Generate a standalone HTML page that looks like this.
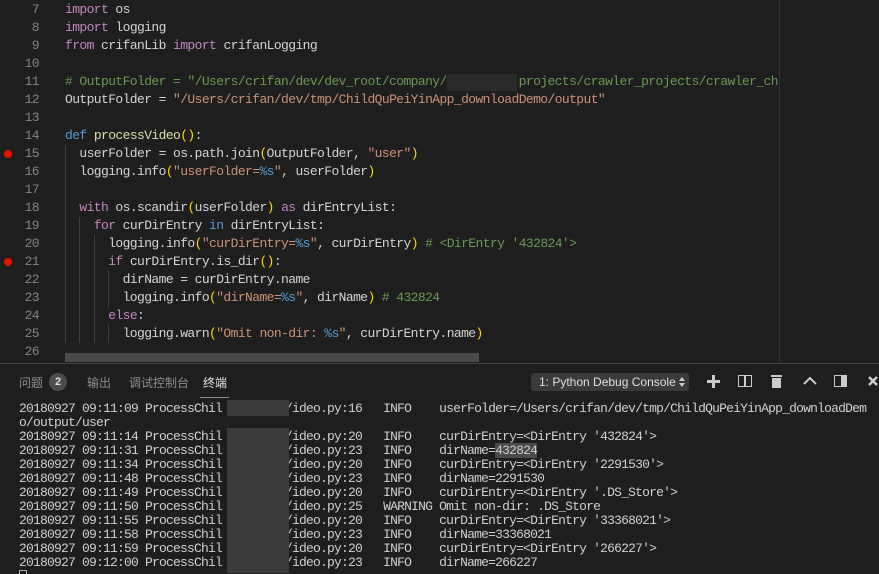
<!DOCTYPE html>
<html><head><meta charset="utf-8"><style>
body{margin:0;width:879px;height:573px;background:#1e1e1e;overflow:hidden;position:relative;font-family:"Liberation Mono",monospace;}
.ln{position:absolute;left:0;width:39px;text-align:right;color:#858585;font-size:13px;letter-spacing:-0.6px;line-height:18px;}
.cd{position:absolute;left:65px;color:#d4d4d4;font-size:13px;letter-spacing:-0.6px;line-height:18px;white-space:pre;}
.k{color:#c586c0}.b{color:#569cd6}.f{color:#dcdcaa}.s{color:#ce9178}.c{color:#6a9955}.p{color:#ffd700}
.bp{position:absolute;left:4px;width:8px;height:8px;border-radius:50%;background:#e51400}
.t{position:absolute;left:19px;color:#d0d0d0;font-size:13px;letter-spacing:-0.8px;line-height:14px;white-space:pre;}
.tab{position:absolute;top:374px;font-family:"Liberation Sans","Noto Sans CJK SC",sans-serif;font-size:12px;color:#8f8f8f}
.blur{position:absolute;background:#3b3b3b}
</style></head><body>
<div class="ln" style="top:1px">7</div><div class="cd" style="top:1px"><span class="k">import</span> os</div>
<div class="ln" style="top:19px">8</div><div class="cd" style="top:19px"><span class="k">import</span> logging</div>
<div class="ln" style="top:37px">9</div><div class="cd" style="top:37px"><span class="k">from</span> crifanLib <span class="k">import</span> crifanLogging</div>
<div class="ln" style="top:55px">10</div>
<div class="ln" style="top:73px">11</div><div class="cd" style="top:73px"><span class="c"># OutputFolder = "/Users/crifan/dev/dev_root/company/          projects/crawler_projects/crawler_ch</span></div>
<div class="blur" style="left:447px;top:74px;width:70px;height:17px;background:#2a2a2a"></div>
<div class="ln" style="top:91px">12</div><div class="cd" style="top:91px">OutputFolder = <span class="s">"/Users/crifan/dev/tmp/ChildQuPeiYinApp_downloadDemo/output"</span></div>
<div class="ln" style="top:109px">13</div>
<div class="ln" style="top:127px">14</div><div class="cd" style="top:127px"><span class="b">def</span> <span class="f">processVideo</span><span class="p">()</span>:</div>
<div class="bp" style="top:150px"></div>
<div class="ln" style="top:145px">15</div><div class="cd" style="top:145px">  userFolder = os.path.join<span class="p">(</span>OutputFolder, <span class="s">"user"</span><span class="p">)</span></div>
<div class="ln" style="top:163px">16</div><div class="cd" style="top:163px">  logging.info<span class="p">(</span><span class="s">"userFolder=</span><span class="b">%s</span><span class="s">"</span>, userFolder<span class="p">)</span></div>
<div class="ln" style="top:181px">17</div>
<div class="ln" style="top:199px">18</div><div class="cd" style="top:199px">  <span class="k">with</span> os.scandir<span class="p">(</span>userFolder<span class="p">)</span> <span class="k">as</span> dirEntryList:</div>
<div class="ln" style="top:217px">19</div><div class="cd" style="top:217px">    <span class="k">for</span> curDirEntry <span class="b">in</span> dirEntryList:</div>
<div class="ln" style="top:235px">20</div><div class="cd" style="top:235px">      logging.info<span class="p">(</span><span class="s">"curDirEntry=</span><span class="b">%s</span><span class="s">"</span>, curDirEntry<span class="p">)</span> <span class="c"># &lt;DirEntry '432824'&gt;</span></div>
<div class="bp" style="top:258px"></div>
<div class="ln" style="top:253px">21</div><div class="cd" style="top:253px">      <span class="k">if</span> curDirEntry.is_dir<span class="p">()</span>:</div>
<div class="ln" style="top:271px">22</div><div class="cd" style="top:271px">        dirName = curDirEntry.name</div>
<div class="ln" style="top:289px">23</div><div class="cd" style="top:289px">        logging.info<span class="p">(</span><span class="s">"dirName=</span><span class="b">%s</span><span class="s">"</span>, dirName<span class="p">)</span> <span class="c"># 432824</span></div>
<div class="ln" style="top:307px">24</div><div class="cd" style="top:307px">      <span class="k">else</span>:</div>
<div class="ln" style="top:325px">25</div><div class="cd" style="top:325px">        logging.warn<span class="p">(</span><span class="s">"Omit non-dir: </span><span class="b">%s</span><span class="s">"</span>, curDirEntry.name<span class="p">)</span></div>
<div class="ln" style="top:343px">26</div>
<div style="position:absolute;left:65px;top:145px;width:1px;height:198px;background:#404040"></div>
<div style="position:absolute;left:79px;top:217px;width:1px;height:126px;background:#404040"></div>
<div style="position:absolute;left:94px;top:235px;width:1px;height:108px;background:#404040"></div>
<div style="position:absolute;left:108px;top:271px;width:1px;height:36px;background:#404040"></div>
<div style="position:absolute;left:108px;top:325px;width:1px;height:18px;background:#404040"></div>
<div style="position:absolute;left:779px;top:0;width:1px;height:363px;background:#333"></div>
<div style="position:absolute;left:65px;top:353px;width:414px;height:9px;background:#4a4a4a"></div>
<div style="position:absolute;left:0;top:363px;width:879px;height:1px;background:#444"></div>
<div class="tab" style="left:19px">问题</div>
<div style="position:absolute;left:49px;top:373px;width:18px;height:18px;border-radius:50%;background:#4d4d4d;color:#ddd;font:bold 11px 'Liberation Sans',sans-serif;text-align:center;line-height:18px">2</div>
<div class="tab" style="left:87px">输出</div>
<div class="tab" style="left:129px">调试控制台</div>
<div class="tab" style="left:203px;color:#e7e7e7">终端</div>
<div style="position:absolute;left:200px;top:397px;width:29px;height:1px;background:#888"></div>
<div style="position:absolute;left:531px;top:373px;width:158px;height:18px;background:#3a3a3a;border-radius:3px;color:#e0e0e0;font:12px 'Liberation Sans',sans-serif;line-height:18px;text-indent:8px">1: Python Debug Console</div>
<svg style="position:absolute;left:679px;top:376px" width="6" height="12"><path d="M0 5 L3 1 L6 5Z M0 7 L3 11 L6 7Z" fill="#ccc"/></svg>
<div style="position:absolute;left:707px;top:380px;width:13px;height:3px;background:#ccc"></div>
<div style="position:absolute;left:712px;top:375px;width:3px;height:13px;background:#ccc"></div>
<div style="position:absolute;left:738px;top:375px;width:12px;height:10px;border:1.5px solid #ccc"></div>
<div style="position:absolute;left:744px;top:375px;width:1.5px;height:12px;background:#ccc"></div>
<div style="position:absolute;left:771px;top:375px;width:11px;height:2px;background:#ccc"></div>
<div style="position:absolute;left:772px;top:378px;width:9px;height:10px;background:#ccc"></div>
<svg style="position:absolute;left:802px;top:375px" width="16" height="12"><path d="M2 9 L8 3 L14 9" stroke="#ccc" stroke-width="2" fill="none"/></svg>
<div style="position:absolute;left:834px;top:375px;width:11px;height:10px;border:1.5px solid #ccc"></div>
<div style="position:absolute;left:841px;top:375px;width:6px;height:12px;background:#ccc"></div>
<svg style="position:absolute;left:867px;top:375px" width="12" height="12"><path d="M2 2 L10 10 M10 2 L2 10" stroke="#ccc" stroke-width="2.5"/></svg>
<div class="t" style="top:402px">20180927 09:11:09 ProcessChil         /ideo.py:16   INFO    userFolder=/Users/crifan/dev/tmp/ChildQuPeiYinApp_downloadDem</div>
<div class="t" style="top:416px">o/output/user</div>
<div class="t" style="top:430px">20180927 09:11:14 ProcessChil         /ideo.py:20   INFO    curDirEntry=&lt;DirEntry '432824'&gt;</div>
<div class="t" style="top:444px">20180927 09:11:31 ProcessChil         /ideo.py:23   INFO    dirName=<span style="background:#4a4a4a">432824</span></div>
<div class="t" style="top:458px">20180927 09:11:34 ProcessChil         /ideo.py:20   INFO    curDirEntry=&lt;DirEntry '2291530'&gt;</div>
<div class="t" style="top:472px">20180927 09:11:48 ProcessChil         /ideo.py:23   INFO    dirName=2291530</div>
<div class="t" style="top:486px">20180927 09:11:49 ProcessChil         /ideo.py:20   INFO    curDirEntry=&lt;DirEntry '.DS_Store'&gt;</div>
<div class="t" style="top:500px">20180927 09:11:50 ProcessChil         /ideo.py:25   WARNING Omit non-dir: .DS_Store</div>
<div class="t" style="top:514px">20180927 09:11:55 ProcessChil         /ideo.py:20   INFO    curDirEntry=&lt;DirEntry '33368021'&gt;</div>
<div class="t" style="top:528px">20180927 09:11:58 ProcessChil         /ideo.py:23   INFO    dirName=33368021</div>
<div class="t" style="top:542px">20180927 09:11:59 ProcessChil         /ideo.py:20   INFO    curDirEntry=&lt;DirEntry '266227'&gt;</div>
<div class="t" style="top:556px">20180927 09:12:00 ProcessChil         /ideo.py:23   INFO    dirName=266227</div>
<div class="blur" style="left:227px;top:400px;width:62px;height:16px"></div>
<div class="blur" style="left:227px;top:428px;width:62px;height:145px"></div>
<div style="position:absolute;left:19px;top:570px;width:6px;height:3px;border:1px solid #aaa;border-bottom:none"></div>
</body></html>
